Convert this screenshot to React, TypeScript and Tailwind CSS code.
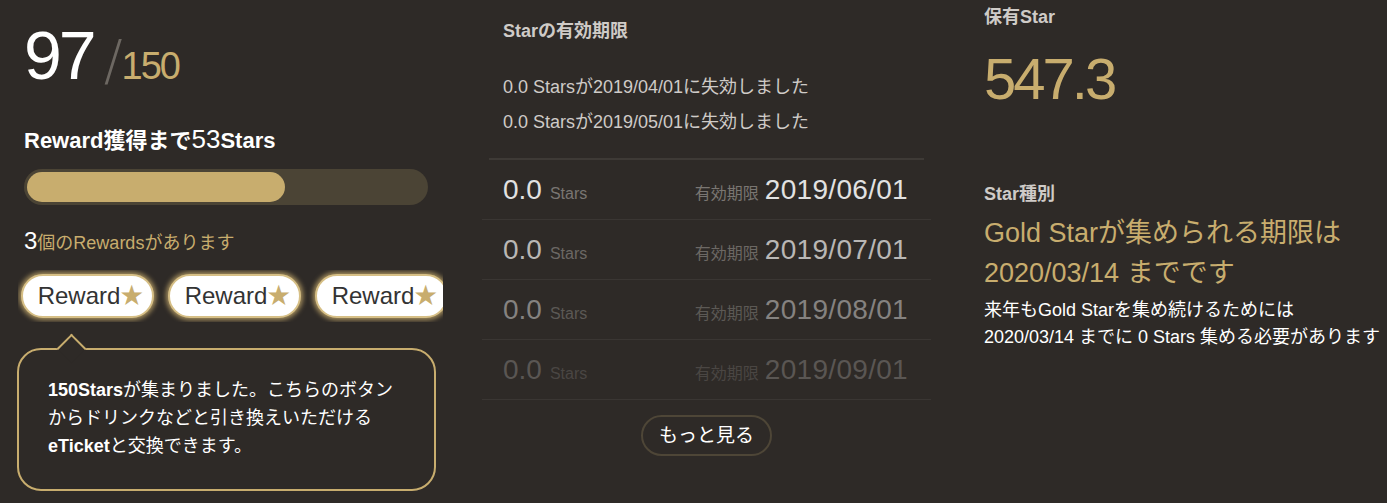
import React from "react";

const FONT = { fontFamily: '"Liberation Sans", "Noto Sans CJK JP", sans-serif' };

const rows = [
  { date: "2019/06/01", num: "text-[#e2e2e2]", sub: "text-[#7a7672]" },
  { date: "2019/07/01", num: "text-[#b9b7b5]", sub: "text-[#6c6864]" },
  { date: "2019/08/01", num: "text-[#858280]", sub: "text-[#5c5955]" },
  { date: "2019/09/01", num: "text-[#5a5653]", sub: "text-[#4a4643]" },
];

const RewardButton = () => (
  <button className="shrink-0 flex items-center justify-center pl-[6px] h-[44px] w-[133px] rounded-full bg-white border-2 border-[#d6bf86] shadow-[0_0_5px_2px_rgba(200,173,110,0.8)] text-[24px] text-[#333] leading-none">
    Reward
    <span
      className="text-[23px] text-[#c8ad6e] -translate-y-[3px]"
      style={{ fontFamily: '"Noto Sans CJK JP", sans-serif' }}
    >
      ★
    </span>
  </button>
);

const App = () => {
  return (
    <div className="w-[1387px] h-[503px] bg-[#2e2a27] flex overflow-hidden" style={FONT}>
      {/* left */}
      <div className="w-[482px] shrink-0 pl-6 pt-[21px]">
        <div className="flex items-baseline h-[68px]">
          <span className="text-[68px] leading-none tracking-[-3px] text-white">97</span>
          <span
            className="ml-[10px] text-[56px] leading-none font-extralight text-[#6d6862]"
            style={{ fontFamily: '"DejaVu Sans", sans-serif' }}
          >
            /
          </span>
          <span className="-ml-[1px] text-[38px] leading-none tracking-[-2px] text-[#c8ad6e]">150</span>
        </div>
        <div className="mt-[37px] text-[22px] leading-none font-bold text-white">
          Reward獲得まで<span className="font-normal text-[26px]">53</span>Stars
        </div>
        <div className="mt-[17px] w-[404px] h-[36px] rounded-full bg-[#4b4435] p-[3px]">
          <div className="h-full w-[258px] rounded-full bg-[#c8ad6e]" />
        </div>
        <div className="mt-[24px] text-[18px] leading-none text-[#c8ad6e]">
          <span className="text-[24px] text-white">3</span>個のRewardsがあります
        </div>
        <div className="mt-[17px] -ml-[6px] w-[425px] overflow-hidden py-[4px] pl-[3px]">
          <div className="flex gap-[14px]">
            <RewardButton />
            <RewardButton />
            <RewardButton />
          </div>
        </div>
        <div className="relative mt-[26px] -ml-[7px] w-[419px] h-[143px] rounded-[24px] border-2 border-[#c8ad6e] pt-[26px] pl-[29px] text-[18px] leading-[28px] text-white">
          <div className="absolute left-[42px] -top-[12px] w-[21px] h-[21px] rotate-45 bg-[#2e2a27] border-l-2 border-t-2 border-[#c8ad6e]" />
          <p className="relative">
            <span className="font-bold">150Stars</span>が集まりました。こちらのボタン
            <br />
            からドリンクなどと引き換えいただける
            <br />
            <span className="font-bold">eTicket</span>と交換できます。
          </p>
        </div>
      </div>

      {/* middle */}
      <div className="w-[449px] shrink-0 pt-[22px]">
        <div className="pl-[21px] text-[18px] leading-none font-bold text-[#cfcbc7]">Starの有効期限</div>
        <div className="mt-[30px] pl-[21px] text-[18px] leading-[35px] text-[#cfcbc7]">
          <div>0.0 Starsが2019/04/01に失効しました</div>
          <div>0.0 Starsが2019/05/01に失効しました</div>
        </div>
        <div className="mt-[18px] mx-[7px] h-[2px] bg-[#3e3a36]" />
        {rows.map((r) => (
          <div key={r.date} className="h-[60px] border-b border-[#3a3633] flex items-center justify-between pl-[21px] pr-[23px]">
            <div className="flex items-baseline gap-[8px]">
              <span className={`text-[28px] ${r.num}`}>0.0</span>
              <span className={`text-[16px] ${r.sub}`}>Stars</span>
            </div>
            <div className="flex items-baseline gap-[6px]">
              <span className={`text-[16px] ${r.sub}`}>有効期限</span>
              <span className={`text-[28px] tracking-[0.3px] ${r.num}`}>{r.date}</span>
            </div>
          </div>
        ))}
        <div className="flex justify-center mt-[15px]">
          <button className="h-[41px] w-[131px] rounded-full border-2 border-[#4e4637] text-[19px] text-white leading-none">
            もっと見る
          </button>
        </div>
      </div>

      {/* right */}
      <div className="flex-1 pl-[53px] pt-[8px]">
        <div className="text-[18px] leading-none font-bold text-[#cfcbc7]">保有Star</div>
        <div className="mt-[24px] text-[58px] leading-none tracking-[-3px] text-[#c8ad6e]">547.3</div>
        <div className="mt-[77px] text-[18px] leading-none font-bold text-[#cfcbc7]">Star種別</div>
        <div className="mt-[10px] text-[27px] leading-[40px] text-[#c8ad6e]">
          Gold Starが集められる期限は
          <br />
          2020/03/14 までです
        </div>
        <div className="mt-[4px] text-[18px] leading-[27px] text-white">
          来年もGold Starを集め続けるためには
          <br />
          2020/03/14 までに 0 Stars 集める必要があります
        </div>
      </div>
    </div>
  );
};

export default App;
